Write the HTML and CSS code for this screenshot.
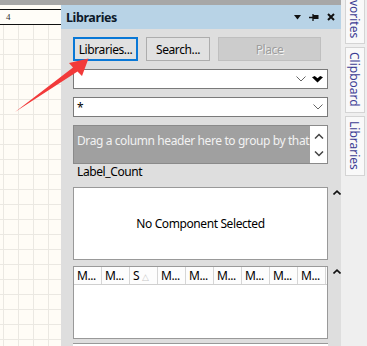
FILE: index.html
```html
<!DOCTYPE html>
<html>
<head>
<meta charset="utf-8">
<link rel="stylesheet" href="styles.css">
</head>
<body>
<div class="screen">
  <div class="canvas">
    <div class="topstrip"></div>
    <div class="ruler"><span class="ruler-num">4</span></div>
    <div class="grid"></div>
  </div>
  <div class="panel">
    <div class="topstrip"></div>
    <div class="panel-head">
      <span class="panel-title">Libraries</span>
      <div class="head-icons">
        <svg width="7" height="5" viewBox="0 0 7 5"><path d="M0 0H7L3.5 4.5Z" fill="#111"/></svg>
        <svg width="10" height="9" viewBox="0 0 10 9"><path d="M0 4.5H4M4 1V8" stroke="#111" stroke-width="1.3" fill="none"/><rect x="4" y="2" width="5.5" height="4" fill="#111"/></svg>
        <svg width="8" height="8" viewBox="0 0 8 8"><path d="M1 1L7 7M7 1L1 7" stroke="#111" stroke-width="2"/></svg>
      </div>
    </div>
    <div class="panel-body">
      <div class="btn-row">
        <div class="btn btn-primary">Libraries...</div>
        <div class="btn">Search...</div>
        <div class="btn btn-disabled">Place</div>
      </div>
      <div class="combo">
        <span class="combo-text"></span>
        <svg class="chev" width="10" height="6" viewBox="0 0 10 6"><path d="M0.5 0.5L5 5L9.5 0.5" stroke="#666" fill="none"/></svg>
        <svg class="bigchev" width="11" height="7" viewBox="0 0 11 7"><path d="M0 1.2L2.8 0L5.5 2.2L8.2 0L11 1.2L5.5 6.5Z" fill="#000"/></svg>
      </div>
      <div class="combo">
        <span class="combo-text">*</span>
        <svg class="chev" width="10" height="6" viewBox="0 0 10 6"><path d="M0.5 0.5L5 5L9.5 0.5" stroke="#666" fill="none"/></svg>
      </div>
      <div class="group-area">
        <span class="group-text">Drag a column header here to group by that column</span>
        <div class="vscroll">
          <svg width="10" height="6" viewBox="0 0 10 6"><path d="M1 5.5L5 1.5L9 5.5" stroke="#444" stroke-width="1.5" fill="none"/></svg>
          <svg width="10" height="6" viewBox="0 0 10 6"><path d="M1 0.5L5 4.5L9 0.5" stroke="#444" stroke-width="1.5" fill="none"/></svg>
        </div>
      </div>
      <div class="label-count">Label_Count</div>
      <div class="box-row">
        <div class="comp-box">No Component Selected</div>
        <svg class="collapse" width="8" height="5" viewBox="0 0 8 5"><path d="M0.5 4.5L4 1.2L7.5 4.5" stroke="#111" stroke-width="1.6" fill="none"/></svg>
      </div>
      <div class="box-row grid-row">
        <div class="table">
          <div class="thead">
            <div class="th">M...</div>
            <div class="th">M...</div>
            <div class="th">S <span class="sort">△</span></div>
            <div class="th">M...</div>
            <div class="th">M...</div>
            <div class="th">M...</div>
            <div class="th">M...</div>
            <div class="th">M...</div>
            <div class="th">M...</div>
          </div>
        </div>
        <svg class="collapse" width="8" height="5" viewBox="0 0 8 5"><path d="M0.5 4.5L4 1.2L7.5 4.5" stroke="#111" stroke-width="1.6" fill="none"/></svg>
      </div>
      <div class="bottom-box"></div>
    </div>
  </div>
  <div class="side">
    <div class="tab tab-first">Favorites</div>
    <div class="tab">Clipboard</div>
    <div class="tab">Libraries</div>
  </div>
  <svg class="arrow" width="100" height="120" viewBox="0 0 100 120"><polygon points="15,112 73,67.5 69,63 88.5,58.5 82,76 77.5,71.5" fill="#f23a3a"/></svg>
</div>
</body>
</html>
```

FILE: styles.css
```css
html, body {
  margin: 0;
  padding: 0;
}
body {
  width: 367px;
  height: 346px;
  overflow: hidden;
  font-family: "Noto Sans", "Open Sans", sans-serif;
  font-size: 12px;
  letter-spacing: -0.4px;
  color: #000;
}
.screen {
  position: relative;
  display: flex;
  width: 367px;
  height: 346px;
  overflow: hidden;
}
.topstrip {
  height: 5px;
  background: #a7a7a7;
  flex: none;
}
.canvas {
  width: 61px;
  flex: none;
  display: flex;
  flex-direction: column;
  background: #fffcf6;
}
.ruler {
  flex: none;
  height: 14px;
  margin-top: 4px;
  border-top: 1px solid #111;
  border-bottom: 1px solid #111;
  background: #fffdf8;
  display: flex;
  align-items: center;
}
.ruler-num {
  font-family: "Liberation Serif", serif;
  font-size: 9px;
  letter-spacing: 0;
  color: #333;
  margin-left: 6px;
}
.grid {
  flex: 1;
  background-color: #fffcf6;
  background-image:
    linear-gradient(to right, #ebe8e2 1px, transparent 1px),
    linear-gradient(to bottom, #ebe8e2 1px, transparent 1px);
  background-size: 15px 15px;
  background-position: 3px 14px;
}
.panel {
  width: 280px;
  flex: none;
  display: flex;
  flex-direction: column;
  background: #dedede;
  overflow: hidden;
}
.panel-head {
  flex: none;
  height: 24px;
  background: #b8d3e6;
  display: flex;
  align-items: center;
  justify-content: space-between;
  padding: 0 6px 0 5px;
}
.panel-title {
  font-weight: bold;
  font-size: 12.5px;
  color: #0d1a2a;
}
.head-icons {
  display: flex;
  align-items: center;
  gap: 8px;
}
.panel-body {
  flex: 1;
  min-height: 0;
  padding: 8px 0 0 12px;
  display: flex;
  flex-direction: column;
}
.btn-row {
  flex: none;
  display: flex;
  gap: 8px;
  height: 24px;
}
.btn {
  box-sizing: border-box;
  width: 64px;
  height: 24px;
  border: 1px solid #adadad;
  background: #e1e1e1;
  display: flex;
  align-items: center;
  justify-content: center;
}
.btn-primary {
  width: 65px;
  border: 2px solid #0a78d6;
}
.btn-disabled {
  width: 103px;
  background: #cccccc;
  border-color: #bfbfbf;
  color: #9d9d9d;
  text-shadow: 1px 1px 0 #f4f4f4;
}
.combo {
  flex: none;
  box-sizing: border-box;
  width: 255px;
  height: 20px;
  margin-top: 8px;
  background: #fff;
  border: 1px solid #7a7a7a;
  display: flex;
  align-items: center;
  padding: 0 4px 0 3px;
}
.combo-text {
  flex: 1;
}
.bigchev {
  margin-left: 6px;
}
.group-area {
  flex: none;
  box-sizing: border-box;
  width: 255px;
  height: 39px;
  margin-top: 8px;
  background: #a0a0a0;
  border: 1px solid #8a8a8a;
  display: flex;
  overflow: hidden;
}
.group-text {
  flex: 1;
  white-space: nowrap;
  overflow: hidden;
  color: #f2f2f2;
  padding: 6px 0 0 3px;
}
.vscroll {
  width: 17px;
  flex: none;
  background: #fff;
  display: flex;
  flex-direction: column;
  align-items: center;
  justify-content: space-between;
  padding: 7px 0 6px;
}
.label-count {
  flex: none;
  height: 18px;
  line-height: 16px;
  padding-left: 4px;
}
.box-row {
  flex: none;
  display: flex;
  align-items: flex-start;
  margin-top: 5px;
}
.collapse {
  margin: 3px 0 0 5px;
}
.comp-box {
  box-sizing: border-box;
  width: 255px;
  height: 73px;
  background: #fff;
  border: 1px solid #999;
  display: flex;
  align-items: center;
  justify-content: center;
}
.grid-row {
  margin-top: 6px;
}
.table {
  box-sizing: border-box;
  width: 255px;
  height: 73px;
  background: #fff;
  border: 1px solid #999;
}
.thead {
  display: flex;
  height: 17px;
  border-bottom: 1px solid #cfcfcf;
  background: #fdfdfd;
}
.th {
  box-sizing: border-box;
  width: 28px;
  border-right: 1px solid #d6d6d6;
  padding-left: 3px;
  line-height: 17px;
  white-space: nowrap;
  overflow: hidden;
  flex: none;
}
.sort {
  color: #c8c8c8;
  font-size: 9px;
}
.bottom-box {
  flex: none;
  width: 255px;
  height: 10px;
  margin-top: 4px;
  background: #fff;
  border-top: 1px solid #999;
}
.side {
  width: 26px;
  flex: none;
  background: #efefef;
  display: flex;
  flex-direction: column;
  align-items: center;
  gap: 3px;
  overflow: hidden;
}
.tab {
  flex: none;
  box-sizing: border-box;
  width: 20px;
  writing-mode: vertical-rl;
  background: #f9f9f9;
  border: 1px solid #d4d4d4;
  padding: 4px 0 5px;
  color: #3d3d94;
  font-size: 12px;
  letter-spacing: 0;
  display: flex;
  align-items: center;
  margin-left: 1px;
}
.tab-first {
  margin-top: -18px;
}
.arrow {
  position: absolute;
  left: 0;
  top: 0;
}
```
